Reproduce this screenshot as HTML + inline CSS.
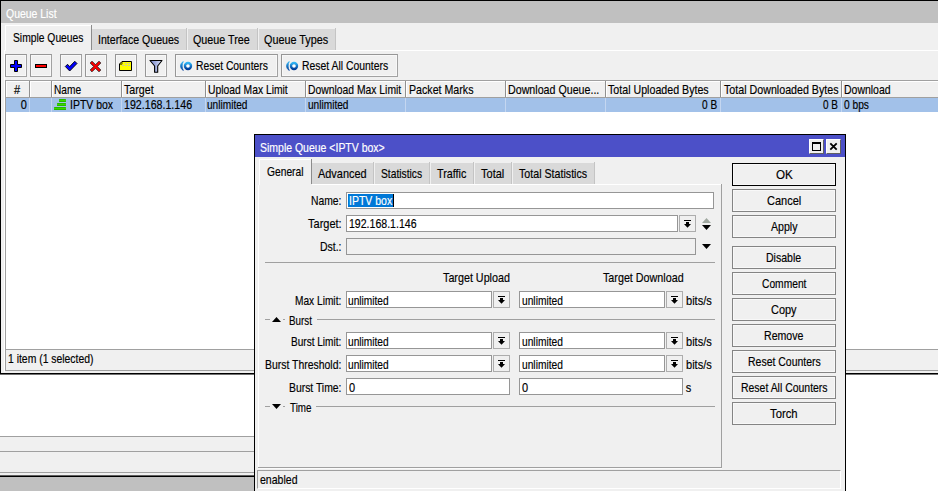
<!DOCTYPE html>
<html><head><meta charset="utf-8"><title>Queue List</title>
<style>
html,body{margin:0;padding:0;background:#fff;}
body{width:938px;height:491px;position:relative;overflow:hidden;font-family:"Liberation Sans",sans-serif;font-size:11px;color:#000;}
body>div,body>svg{position:absolute;}
.t{white-space:nowrap;line-height:13px;-webkit-text-stroke:0.15px currentColor;transform-origin:0 10px;}
</style></head><body>
<div style="left:0px;top:0px;width:938px;height:491px;background:#fff"></div>
<div style="left:0px;top:436px;width:300px;height:40px;background:#f0f0f0"></div>
<div style="left:0px;top:436px;width:300px;height:1px;background:#a0a0a0"></div>
<div style="left:0px;top:451px;width:300px;height:1px;background:#a0a0a0"></div>
<div style="left:0px;top:472px;width:300px;height:1px;background:#a0a0a0"></div>
<div style="left:0px;top:475px;width:300px;height:1px;background:#606060"></div>
<div style="left:0px;top:476px;width:300px;height:1px;background:#000"></div>
<div style="left:0px;top:477px;width:300px;height:14px;background:#c0c0c0"></div>
<div style="left:0px;top:0px;width:938px;height:375px;background:#000"></div>
<div style="left:1px;top:1px;width:937px;height:372px;background:#f0f0f0"></div>
<div style="left:0px;top:374px;width:938px;height:1px;background:#707070"></div>
<div style="left:1px;top:1px;width:937px;height:22px;background:#c0c0c0"></div>
<div class="t" style="left:5.55px;top:8px;transform:scale(0.9502,1.1);color:#fff">Queue List</div>
<div style="left:92px;top:29px;width:94px;height:21px;background:#d9d9d9"></div>
<div style="left:186px;top:28px;width:1px;height:22px;background:#c4c4c4"></div>
<div class="t" style="left:97.95px;top:34px;transform:scale(0.9615,1.1);">Interface Queues</div>
<div style="left:188px;top:29px;width:69px;height:21px;background:#d9d9d9"></div>
<div style="left:257px;top:28px;width:1px;height:22px;background:#c4c4c4"></div>
<div class="t" style="left:193.45px;top:34px;transform:scale(0.9785,1.1);">Queue Tree</div>
<div style="left:259px;top:29px;width:76px;height:21px;background:#d9d9d9"></div>
<div style="left:335px;top:28px;width:1px;height:22px;background:#c4c4c4"></div>
<div class="t" style="left:264.35px;top:34px;transform:scale(0.9824,1.1);">Queue Types</div>
<div style="left:5px;top:25px;width:1px;height:26px;background:#fff"></div>
<div style="left:4px;top:50px;width:1px;height:322px;background:#fff"></div>
<div style="left:5px;top:25px;width:86px;height:1px;background:#fff"></div>
<div style="left:91px;top:25px;width:1px;height:25px;background:#8c8c8c"></div>
<div class="t" style="left:12.95px;top:32px;transform:scale(0.9368,1.1);">Simple Queues</div>
<div style="left:92px;top:50px;width:846px;height:1px;background:#fff"></div>
<div style="left:5px;top:54px;width:22px;height:23px;border:1px solid #a2a2a2;border-top-color:#969696;border-left-color:#969696;background:#f0f0f0;box-sizing:border-box;box-shadow:inset 0 0 0 1px #f8f8f8"></div>
<div style="left:30px;top:54px;width:22px;height:23px;border:1px solid #a2a2a2;border-top-color:#969696;border-left-color:#969696;background:#f0f0f0;box-sizing:border-box;box-shadow:inset 0 0 0 1px #f8f8f8"></div>
<div style="left:60px;top:54px;width:22px;height:23px;border:1px solid #a2a2a2;border-top-color:#969696;border-left-color:#969696;background:#f0f0f0;box-sizing:border-box;box-shadow:inset 0 0 0 1px #f8f8f8"></div>
<div style="left:85px;top:54px;width:22px;height:23px;border:1px solid #a2a2a2;border-top-color:#969696;border-left-color:#969696;background:#f0f0f0;box-sizing:border-box;box-shadow:inset 0 0 0 1px #f8f8f8"></div>
<div style="left:115px;top:54px;width:22px;height:23px;border:1px solid #a2a2a2;border-top-color:#969696;border-left-color:#969696;background:#f0f0f0;box-sizing:border-box;box-shadow:inset 0 0 0 1px #f8f8f8"></div>
<div style="left:145px;top:54px;width:22px;height:23px;border:1px solid #a2a2a2;border-top-color:#969696;border-left-color:#969696;background:#f0f0f0;box-sizing:border-box;box-shadow:inset 0 0 0 1px #f8f8f8"></div>
<div style="left:175px;top:54px;width:103px;height:23px;border:1px solid #a2a2a2;border-top-color:#969696;border-left-color:#969696;background:#f0f0f0;box-sizing:border-box;box-shadow:inset 0 0 0 1px #f8f8f8"></div>
<div style="left:281px;top:54px;width:117px;height:23px;border:1px solid #a2a2a2;border-top-color:#969696;border-left-color:#969696;background:#f0f0f0;box-sizing:border-box;box-shadow:inset 0 0 0 1px #f8f8f8"></div>
<div class="t" style="left:196.45px;top:60px;transform:scale(0.9404,1.1);">Reset Counters</div>
<div class="t" style="left:302.05px;top:60px;transform:scale(0.9457,1.1);">Reset All Counters</div>
<div style="left:5px;top:80px;width:933px;height:291px;background:#fff;border-left:1px solid #a0a0a0;border-top:1px solid #a0a0a0;box-sizing:border-box"></div>
<div style="left:6px;top:81px;width:932px;height:16px;background:#f0f0f0"></div>
<div style="left:6px;top:97px;width:932px;height:1px;background:#a0a0a0"></div>
<div style="left:6px;top:81px;width:932px;height:1px;background:#fff"></div>
<div style="left:6px;top:81px;width:1px;height:16px;background:#fff"></div>
<div style="left:6px;top:98px;width:932px;height:14px;background:#a2c1e9"></div>
<div style="left:29px;top:81px;width:1px;height:16px;background:#909090"></div>
<div style="left:30px;top:81px;width:1px;height:16px;background:#fff"></div>
<div style="left:29px;top:98px;width:1px;height:14px;background:#c4d6f0"></div>
<div style="left:51px;top:81px;width:1px;height:16px;background:#909090"></div>
<div style="left:52px;top:81px;width:1px;height:16px;background:#fff"></div>
<div style="left:51px;top:98px;width:1px;height:14px;background:#c4d6f0"></div>
<div style="left:121px;top:81px;width:1px;height:16px;background:#909090"></div>
<div style="left:122px;top:81px;width:1px;height:16px;background:#fff"></div>
<div style="left:121px;top:98px;width:1px;height:14px;background:#c4d6f0"></div>
<div style="left:205px;top:81px;width:1px;height:16px;background:#909090"></div>
<div style="left:206px;top:81px;width:1px;height:16px;background:#fff"></div>
<div style="left:205px;top:98px;width:1px;height:14px;background:#c4d6f0"></div>
<div style="left:305px;top:81px;width:1px;height:16px;background:#909090"></div>
<div style="left:306px;top:81px;width:1px;height:16px;background:#fff"></div>
<div style="left:305px;top:98px;width:1px;height:14px;background:#c4d6f0"></div>
<div style="left:405px;top:81px;width:1px;height:16px;background:#909090"></div>
<div style="left:406px;top:81px;width:1px;height:16px;background:#fff"></div>
<div style="left:405px;top:98px;width:1px;height:14px;background:#c4d6f0"></div>
<div style="left:505px;top:81px;width:1px;height:16px;background:#909090"></div>
<div style="left:506px;top:81px;width:1px;height:16px;background:#fff"></div>
<div style="left:505px;top:98px;width:1px;height:14px;background:#c4d6f0"></div>
<div style="left:605px;top:81px;width:1px;height:16px;background:#909090"></div>
<div style="left:606px;top:81px;width:1px;height:16px;background:#fff"></div>
<div style="left:605px;top:98px;width:1px;height:14px;background:#c4d6f0"></div>
<div style="left:720px;top:81px;width:1px;height:16px;background:#909090"></div>
<div style="left:721px;top:81px;width:1px;height:16px;background:#fff"></div>
<div style="left:720px;top:98px;width:1px;height:14px;background:#c4d6f0"></div>
<div style="left:841px;top:81px;width:1px;height:16px;background:#909090"></div>
<div style="left:842px;top:81px;width:1px;height:16px;background:#fff"></div>
<div style="left:841px;top:98px;width:1px;height:14px;background:#c4d6f0"></div>
<div class="t" style="left:14.10px;top:84px;transform:scale(1.0000,1.1);">#</div>
<div class="t" style="left:54.25px;top:84px;transform:scale(0.9232,1.1);">Name</div>
<div class="t" style="left:124.45px;top:84px;transform:scale(0.9690,1.1);">Target</div>
<div class="t" style="left:208.25px;top:84px;transform:scale(0.9382,1.1);">Upload Max Limit</div>
<div class="t" style="left:308.45px;top:84px;transform:scale(0.9409,1.1);">Download Max Limit</div>
<div class="t" style="left:408.55px;top:84px;transform:scale(0.9677,1.1);">Packet Marks</div>
<div class="t" style="left:508.45px;top:84px;transform:scale(0.9697,1.1);">Download Queue...</div>
<div class="t" style="left:608.15px;top:84px;transform:scale(0.9687,1.1);">Total Uploaded Bytes</div>
<div class="t" style="left:723.65px;top:84px;transform:scale(0.9708,1.1);">Total Downloaded Bytes</div>
<div class="t" style="left:844.45px;top:84px;transform:scale(0.9519,1.1);">Download</div>
<div class="t" style="left:20.70px;top:99px;transform:scale(1.0000,1.1);">0</div>
<div class="t" style="left:70.25px;top:99px;transform:scale(0.9524,1.1);">IPTV box</div>
<div class="t" style="left:124.45px;top:99px;transform:scale(0.9680,1.1);">192.168.1.146</div>
<div class="t" style="left:207.45px;top:99px;transform:scale(0.9193,1.1);">unlimited</div>
<div class="t" style="left:307.65px;top:99px;transform:scale(0.9193,1.1);">unlimited</div>
<div class="t" style="left:701.95px;top:99px;transform:scale(0.9182,1.1);">0 B</div>
<div class="t" style="left:823.25px;top:99px;transform:scale(0.9061,1.1);">0 B</div>
<div class="t" style="left:844.45px;top:99px;transform:scale(0.9275,1.1);">0 bps</div>
<div style="left:6px;top:349px;width:932px;height:22px;background:#f0f0f0;border-top:1px solid #a0a0a0;border-bottom:1px solid #a0a0a0;box-sizing:border-box"></div>
<div class="t" style="left:8.35px;top:353px;transform:scale(0.9442,1.1);">1 item (1 selected)</div>
<div style="left:254px;top:134px;width:592px;height:360px;background:#000"></div>
<div style="left:255px;top:135px;width:590px;height:360px;background:#f0f0f0"></div>
<div style="left:255px;top:135px;width:590px;height:22px;background:#4c50c8"></div>
<div class="t" style="left:260.15px;top:142px;transform:scale(0.9530,1.1);color:#fff">Simple Queue &lt;IPTV box&gt;</div>
<div style="left:809px;top:139px;width:15px;height:15px;background:#f0f0f0;border:1px solid #fff;border-right-color:#606060;border-bottom-color:#606060;box-sizing:border-box"></div>
<div style="left:826px;top:139px;width:15px;height:15px;background:#f0f0f0;border:1px solid #fff;border-right-color:#606060;border-bottom-color:#606060;box-sizing:border-box"></div>
<div style="left:812px;top:142px;width:9px;height:9px;border:1px solid #000;border-top-width:2px;box-sizing:border-box"></div>
<svg style="left:829px;top:142px" width="9" height="9" viewBox="0 0 9 9"><path d="M1.3 1.3L7.7 7.7M7.7 1.3L1.3 7.7" stroke="#000" stroke-width="1.8"/></svg>
<div style="left:312px;top:163px;width:61px;height:21px;background:#d9d9d9"></div>
<div style="left:373px;top:162px;width:1px;height:22px;background:#c4c4c4"></div>
<div class="t" style="left:317.85px;top:168px;transform:scale(0.9928,1.1);">Advanced</div>
<div style="left:375px;top:163px;width:54px;height:21px;background:#d9d9d9"></div>
<div style="left:429px;top:162px;width:1px;height:22px;background:#c4c4c4"></div>
<div class="t" style="left:381.05px;top:168px;transform:scale(0.9330,1.1);">Statistics</div>
<div style="left:431px;top:163px;width:42px;height:21px;background:#d9d9d9"></div>
<div style="left:473px;top:162px;width:1px;height:22px;background:#c4c4c4"></div>
<div class="t" style="left:437.35px;top:168px;transform:scale(0.9783,1.1);">Traffic</div>
<div style="left:475px;top:163px;width:36px;height:21px;background:#d9d9d9"></div>
<div style="left:511px;top:162px;width:1px;height:22px;background:#c4c4c4"></div>
<div class="t" style="left:481.45px;top:168px;transform:scale(1.0022,1.1);">Total</div>
<div style="left:513px;top:163px;width:81px;height:21px;background:#d9d9d9"></div>
<div style="left:594px;top:162px;width:1px;height:22px;background:#c4c4c4"></div>
<div class="t" style="left:519.35px;top:168px;transform:scale(0.9694,1.1);">Total Statistics</div>
<div style="left:259px;top:159px;width:1px;height:26px;background:#fff"></div>
<div style="left:259px;top:159px;width:52px;height:1px;background:#fff"></div>
<div style="left:311px;top:159px;width:1px;height:25px;background:#8c8c8c"></div>
<div class="t" style="left:266.75px;top:166px;transform:scale(0.9322,1.1);">General</div>
<div style="left:312px;top:184px;width:410px;height:1px;background:#fff"></div>
<div style="left:258px;top:185px;width:1px;height:282px;background:#fff"></div>
<div style="left:721px;top:184px;width:1px;height:284px;background:#a0a0a0"></div>
<div style="left:258px;top:467px;width:464px;height:1px;background:#a0a0a0"></div>
<div style="left:258px;top:468px;width:464px;height:1px;background:#fbfbfb"></div>
<div style="left:257px;top:470px;width:584px;height:19px;border:1px solid #a0a0a0;border-right-color:#fff;border-bottom-color:#fff;box-sizing:border-box"></div>
<div class="t" style="left:259.75px;top:474px;transform:scale(0.9578,1.1);">enabled</div>
<div class="t" style="left:311.45px;top:195px;transform:scale(0.9398,1.1);">Name:</div>
<div style="left:346px;top:192px;width:368px;height:17px;background:#fff;border:1px solid #969696;box-sizing:border-box"></div>
<div style="left:348px;top:194px;width:45px;height:13px;background:#0078d7"></div>
<div style="left:393px;top:194px;width:1px;height:13px;background:#000"></div>
<div class="t" style="left:349.35px;top:195px;transform:scale(0.9546,1.1);color:#fff">IPTV box</div>
<div class="t" style="left:308.25px;top:218px;transform:scale(1.0015,1.1);">Target:</div>
<div style="left:346px;top:215px;width:332px;height:17px;background:#fff;border:1px solid #969696;box-sizing:border-box"></div>
<div class="t" style="left:349.45px;top:218px;transform:scale(0.9595,1.1);">192.168.1.146</div>
<div style="left:679px;top:215px;width:17px;height:17px;background:#f0f0f0;border:1px solid #adadad;box-sizing:border-box"></div>
<svg style="left:684px;top:220px" width="7" height="8" viewBox="0 0 7 8"><path d="M0 0H7V1H0zM2 2H5V4H7L3.5 7.8L0 4H2z" fill="#000"/></svg>
<svg style="left:702px;top:218px" width="9" height="5" viewBox="0 0 9 5"><path d="M0 5H9L4.5 0z" fill="#a0a8a0"/></svg>
<svg style="left:702px;top:225px" width="9" height="5" viewBox="0 0 9 5"><path d="M0 0H9L4.5 5z" fill="#000"/></svg>
<div class="t" style="left:320.25px;top:241px;transform:scale(0.9491,1.1);">Dst.:</div>
<div style="left:346px;top:238px;width:350px;height:17px;background:#f0f0f0;border:1px solid #969696;box-sizing:border-box"></div>
<svg style="left:702px;top:244px" width="9" height="5" viewBox="0 0 9 5"><path d="M0 0H9L4.5 5z" fill="#000"/></svg>
<div style="left:265px;top:262px;width:450px;height:1px;background:#a0a0a0"></div>
<div class="t" style="left:443.35px;top:272px;transform:scale(0.9774,1.1);">Target Upload</div>
<div class="t" style="left:602.75px;top:272px;transform:scale(0.9764,1.1);">Target Download</div>
<div class="t" style="left:295.45px;top:295px;transform:scale(0.9232,1.1);">Max Limit:</div>
<div style="left:346px;top:291px;width:146px;height:17px;background:#fff;border:1px solid #969696;box-sizing:border-box"></div>
<div style="left:493px;top:291px;width:17px;height:17px;background:#f0f0f0;border:1px solid #adadad;box-sizing:border-box"></div>
<svg style="left:498px;top:296px" width="7" height="8" viewBox="0 0 7 8"><path d="M0 0H7V1H0zM2 2H5V4H7L3.5 7.8L0 4H2z" fill="#000"/></svg>
<div style="left:519px;top:291px;width:146px;height:17px;background:#fff;border:1px solid #969696;box-sizing:border-box"></div>
<div style="left:666px;top:291px;width:17px;height:17px;background:#f0f0f0;border:1px solid #adadad;box-sizing:border-box"></div>
<svg style="left:671px;top:296px" width="7" height="8" viewBox="0 0 7 8"><path d="M0 0H7V1H0zM2 2H5V4H7L3.5 7.8L0 4H2z" fill="#000"/></svg>
<div class="t" style="left:348.35px;top:295px;transform:scale(0.9239,1.1);">unlimited</div>
<div class="t" style="left:521.55px;top:295px;transform:scale(0.9284,1.1);">unlimited</div>
<div class="t" style="left:685.55px;top:295px;transform:scale(1.0058,1.1);">bits/s</div>
<div style="left:265px;top:319px;width:450px;height:1px;background:#a0a0a0"></div>
<div style="left:270px;top:314px;width:47px;height:12px;background:#f0f0f0"></div>
<div style="left:283px;top:319px;width:2px;height:1px;background:#a0a0a0"></div>
<svg style="left:272px;top:317px" width="9" height="5" viewBox="0 0 9 5"><path d="M0 5H9L4.5 0z" fill="#000"/></svg>
<div class="t" style="left:289.25px;top:315px;transform:scale(0.8930,1.1);">Burst</div>
<div class="t" style="left:291.45px;top:336px;transform:scale(0.9136,1.1);">Burst Limit:</div>
<div style="left:346px;top:332px;width:146px;height:17px;background:#fff;border:1px solid #969696;box-sizing:border-box"></div>
<div style="left:493px;top:332px;width:17px;height:17px;background:#f0f0f0;border:1px solid #adadad;box-sizing:border-box"></div>
<svg style="left:498px;top:337px" width="7" height="8" viewBox="0 0 7 8"><path d="M0 0H7V1H0zM2 2H5V4H7L3.5 7.8L0 4H2z" fill="#000"/></svg>
<div style="left:519px;top:332px;width:146px;height:17px;background:#fff;border:1px solid #969696;box-sizing:border-box"></div>
<div style="left:666px;top:332px;width:17px;height:17px;background:#f0f0f0;border:1px solid #adadad;box-sizing:border-box"></div>
<svg style="left:671px;top:337px" width="7" height="8" viewBox="0 0 7 8"><path d="M0 0H7V1H0zM2 2H5V4H7L3.5 7.8L0 4H2z" fill="#000"/></svg>
<div class="t" style="left:348.35px;top:336px;transform:scale(0.9239,1.1);">unlimited</div>
<div class="t" style="left:521.55px;top:336px;transform:scale(0.9284,1.1);">unlimited</div>
<div class="t" style="left:685.55px;top:336px;transform:scale(1.0058,1.1);">bits/s</div>
<div class="t" style="left:265.35px;top:359px;transform:scale(0.9484,1.1);">Burst Threshold:</div>
<div style="left:346px;top:355px;width:146px;height:17px;background:#fff;border:1px solid #969696;box-sizing:border-box"></div>
<div style="left:493px;top:355px;width:17px;height:17px;background:#f0f0f0;border:1px solid #adadad;box-sizing:border-box"></div>
<svg style="left:498px;top:360px" width="7" height="8" viewBox="0 0 7 8"><path d="M0 0H7V1H0zM2 2H5V4H7L3.5 7.8L0 4H2z" fill="#000"/></svg>
<div style="left:519px;top:355px;width:146px;height:17px;background:#fff;border:1px solid #969696;box-sizing:border-box"></div>
<div style="left:666px;top:355px;width:17px;height:17px;background:#f0f0f0;border:1px solid #adadad;box-sizing:border-box"></div>
<svg style="left:671px;top:360px" width="7" height="8" viewBox="0 0 7 8"><path d="M0 0H7V1H0zM2 2H5V4H7L3.5 7.8L0 4H2z" fill="#000"/></svg>
<div class="t" style="left:348.35px;top:359px;transform:scale(0.9239,1.1);">unlimited</div>
<div class="t" style="left:521.55px;top:359px;transform:scale(0.9284,1.1);">unlimited</div>
<div class="t" style="left:685.55px;top:359px;transform:scale(1.0058,1.1);">bits/s</div>
<div class="t" style="left:289.25px;top:382px;transform:scale(0.9433,1.1);">Burst Time:</div>
<div style="left:346px;top:378px;width:164px;height:17px;background:#fff;border:1px solid #969696;box-sizing:border-box"></div>
<div style="left:519px;top:378px;width:164px;height:17px;background:#fff;border:1px solid #969696;box-sizing:border-box"></div>
<div class="t" style="left:348.90px;top:382px;transform:scale(1.0000,1.1);">0</div>
<div class="t" style="left:521.90px;top:382px;transform:scale(1.0000,1.1);">0</div>
<div class="t" style="left:685.70px;top:382px;transform:scale(1.0000,1.1);">s</div>
<div style="left:265px;top:406px;width:450px;height:1px;background:#a0a0a0"></div>
<div style="left:270px;top:401px;width:46px;height:12px;background:#f0f0f0"></div>
<div style="left:283px;top:406px;width:2px;height:1px;background:#a0a0a0"></div>
<svg style="left:272px;top:404px" width="9" height="5" viewBox="0 0 9 5"><path d="M0 0H9L4.5 5z" fill="#000"/></svg>
<div class="t" style="left:289.75px;top:402px;transform:scale(0.8938,1.1);">Time</div>
<div style="left:732px;top:163px;width:104px;height:23px;background:#f0f0f0;border:1px solid #000;box-sizing:border-box;box-shadow:inset 0 0 0 1px #f8f8f8"></div>
<div class="t" style="left:775.50px;top:169px;transform:scale(1.0597,1.1);">OK</div>
<div style="left:732px;top:189px;width:104px;height:23px;background:#f0f0f0;border:1px solid #848484;box-sizing:border-box;box-shadow:inset 0 0 0 1px #f8f8f8"></div>
<div class="t" style="left:766.80px;top:195px;transform:scale(1.0015,1.1);">Cancel</div>
<div style="left:732px;top:215px;width:104px;height:23px;background:#f0f0f0;border:1px solid #848484;box-sizing:border-box;box-shadow:inset 0 0 0 1px #f8f8f8"></div>
<div class="t" style="left:770.70px;top:221px;transform:scale(0.9618,1.1);">Apply</div>
<div style="left:732px;top:246px;width:104px;height:23px;background:#f0f0f0;border:1px solid #848484;box-sizing:border-box;box-shadow:inset 0 0 0 1px #f8f8f8"></div>
<div class="t" style="left:766.35px;top:252px;transform:scale(0.9578,1.1);">Disable</div>
<div style="left:732px;top:272px;width:104px;height:23px;background:#f0f0f0;border:1px solid #848484;box-sizing:border-box;box-shadow:inset 0 0 0 1px #f8f8f8"></div>
<div class="t" style="left:761.70px;top:278px;transform:scale(0.9319,1.1);">Comment</div>
<div style="left:732px;top:298px;width:104px;height:23px;background:#f0f0f0;border:1px solid #848484;box-sizing:border-box;box-shadow:inset 0 0 0 1px #f8f8f8"></div>
<div class="t" style="left:771.15px;top:304px;transform:scale(0.9942,1.1);">Copy</div>
<div style="left:732px;top:324px;width:104px;height:23px;background:#f0f0f0;border:1px solid #848484;box-sizing:border-box;box-shadow:inset 0 0 0 1px #f8f8f8"></div>
<div class="t" style="left:764.20px;top:330px;transform:scale(0.9622,1.1);">Remove</div>
<div style="left:732px;top:350px;width:104px;height:23px;background:#f0f0f0;border:1px solid #848484;box-sizing:border-box;box-shadow:inset 0 0 0 1px #f8f8f8"></div>
<div class="t" style="left:747.55px;top:356px;transform:scale(0.9522,1.1);">Reset Counters</div>
<div style="left:732px;top:376px;width:104px;height:23px;background:#f0f0f0;border:1px solid #848484;box-sizing:border-box;box-shadow:inset 0 0 0 1px #f8f8f8"></div>
<div class="t" style="left:740.65px;top:382px;transform:scale(0.9501,1.1);">Reset All Counters</div>
<div style="left:732px;top:402px;width:104px;height:23px;background:#f0f0f0;border:1px solid #848484;box-sizing:border-box;box-shadow:inset 0 0 0 1px #f8f8f8"></div>
<div class="t" style="left:770.15px;top:408px;transform:scale(1.0242,1.1);">Torch</div>
<svg style="left:10px;top:60px" width="12" height="12" viewBox="0 0 12 12"><path d="M4.5 .5H7.5V4.5H11.5V7.5H7.5V11.5H4.5V7.5H.5V4.5H4.5z" fill="#0000ff" stroke="#000" stroke-width="1"/></svg>
<svg style="left:35px;top:64px" width="12" height="4" viewBox="0 0 12 4"><rect x=".5" y=".5" width="11" height="3" fill="#ff0000" stroke="#000" stroke-width="1"/></svg>
<svg style="left:64px;top:60px" width="14" height="12" viewBox="0 0 14 12"><path d="M1.3 6.5L3.5 4.3L5.7 6.6L10.8 1.3L13 3.5L5.7 11z" fill="#0000ff" stroke="#000" stroke-width=".9"/></svg>
<svg style="left:89px;top:60px" width="13" height="13" viewBox="0 0 13 13"><path d="M1.2 3L3 1.2L6.5 4.7L10 1.2L11.8 3L8.3 6.5L11.8 10L10 11.8L6.5 8.3L3 11.8L1.2 10L4.7 6.5z" fill="#ff0000" stroke="#000" stroke-width=".7"/></svg>
<svg style="left:119px;top:61px" width="13" height="10" viewBox="0 0 13 10"><path d="M3 .5H12.5V9.5H.5V3z" fill="#ffff00" stroke="#000" stroke-width="1"/><path d="M3 .8V3.2H.8" fill="none" stroke="#000" stroke-width=".7"/><path d="M6 2.5H8M9 2.5H11M3 4.5H5M6 4.5H8M9 4.5H11" stroke="#c8c8a0" stroke-width="1"/></svg>
<svg style="left:149px;top:59px" width="14" height="15" viewBox="0 0 14 15"><defs><linearGradient id="fg" x1="0" y1="0" x2="1" y2="0"><stop offset="0" stop-color="#7080c8"/><stop offset="1" stop-color="#dde4f8"/></linearGradient></defs><path d="M1 1.5H13L8.7 7V13.2H5.6V7z" fill="url(#fg)" stroke="#000" stroke-width="1.1" stroke-linejoin="round"/></svg>
<svg style="left:179px;top:61px" width="14" height="10" viewBox="0 0 14 10"><defs><linearGradient id="rg" x1="0" y1="0" x2="0" y2="1"><stop offset="0" stop-color="#30b4f4"/><stop offset="1" stop-color="#003c98"/></linearGradient></defs><path d="M4.3 .6C.7 2.5 .7 7.5 4.3 9.4C2.7 7 2.7 3 4.3 .6z" fill="url(#rg)" stroke="url(#rg)" stroke-width=".8"/><circle cx="9" cy="5" r="3" fill="#fff" stroke="url(#rg)" stroke-width="2.4"/></svg>
<svg style="left:285px;top:61px" width="14" height="10" viewBox="0 0 14 10"><path d="M4.3 .6C.7 2.5 .7 7.5 4.3 9.4C2.7 7 2.7 3 4.3 .6z" fill="url(#rg)" stroke="url(#rg)" stroke-width=".8"/><circle cx="9" cy="5" r="3" fill="#fff" stroke="url(#rg)" stroke-width="2.4"/></svg>
<svg style="left:54px;top:99px" width="12" height="11" viewBox="0 0 12 11"><defs><linearGradient id="gg" x1="0" y1="0" x2="0" y2="1"><stop offset="0" stop-color="#18a800"/><stop offset=".5" stop-color="#3cd800"/><stop offset="1" stop-color="#18a800"/></linearGradient></defs><rect x="5" y="0" width="7" height="3" rx=".5" fill="url(#gg)"/><rect x="3" y="4" width="9" height="3" rx=".5" fill="url(#gg)"/><rect x="0" y="8" width="12" height="3" rx=".5" fill="url(#gg)"/></svg>

</body></html>
